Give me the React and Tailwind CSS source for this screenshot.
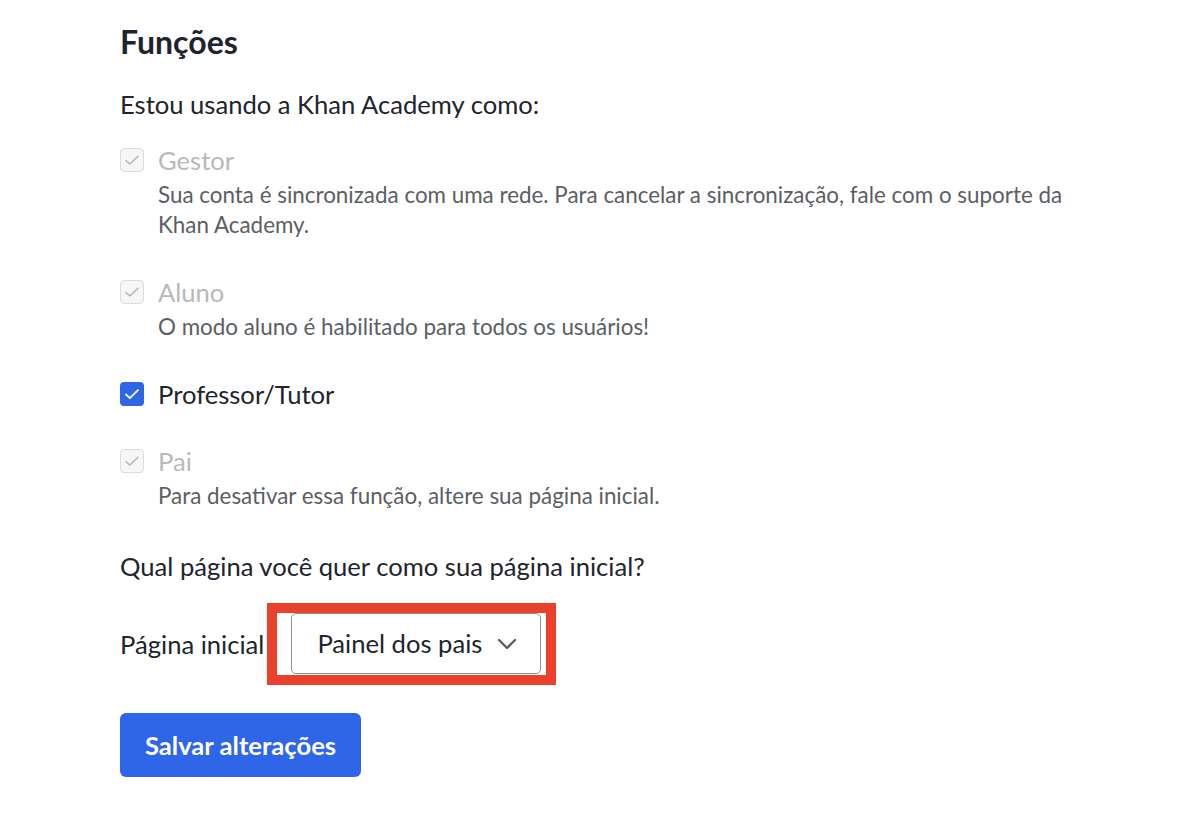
import React from "react";

function Check({ disabled }) {
  if (disabled) {
    return (
      <span className="flex h-[24px] w-[24px] shrink-0 items-center justify-center rounded-[4px] border border-[#dcdcdc] bg-[#f6f6f6]">
        <svg width="16" height="16" viewBox="0 0 16 16" fill="none">
          <path d="M2 8.5l3.8 3.6L14 4.2" stroke="#b3b3b3" strokeWidth="1.4" strokeLinecap="round" strokeLinejoin="round" />
        </svg>
      </span>
    );
  }
  return (
    <span className="flex h-[24px] w-[24px] shrink-0 items-center justify-center rounded-[4px] bg-[#2f66e8]">
      <svg width="16" height="16" viewBox="0 0 16 16" fill="none">
        <path d="M2 8.5l3.8 3.6L14 4.2" stroke="#ffffff" strokeWidth="1.8" strokeLinecap="round" strokeLinejoin="round" />
      </svg>
    </span>
  );
}

function Role({ label, desc, disabled }) {
  return (
    <div className="flex flex-col">
      <div className="flex items-center gap-[14px]">
        <Check disabled={disabled} />
        <span className={"text-[25.6px] leading-[32px] " + (disabled ? "text-[#b9b9b9]" : "text-[#21242c]")}>{label}</span>
      </div>
      {desc && (
        <p className="mt-[4px] pl-[38px] text-[22.4px] leading-[30px] text-[#5b5e63]">{desc}</p>
      )}
    </div>
  );
}

export default function App() {
  return (
    <div className="min-h-[832px] w-full bg-white pl-[120px] pr-[120px] pt-[24px] text-[#21242c]" style={{ fontFamily: "Lato, 'Noto Sans', sans-serif" }}>
      <h2 className="text-[32px] font-bold leading-[36px]">Funções</h2>
      <p className="mt-[29px] text-[25.6px] leading-[30px]">Estou usando a Khan Academy como:</p>
      <div className="mt-[25px] flex flex-col">
        <Role disabled label="Gestor" desc="Sua conta é sincronizada com uma rede. Para cancelar a sincronização, fale com o suporte da Khan Academy." />
        <div className="mt-[36px]">
          <Role disabled label="Aluno" desc="O modo aluno é habilitado para todos os usuários!" />
        </div>
        <div className="mt-[36px]">
          <Role label="Professor/Tutor" />
        </div>
        <div className="mt-[35px]">
          <Role disabled label="Pai" desc="Para desativar essa função, altere sua página inicial." />
        </div>
      </div>
      <p className="mt-[40px] text-[25.6px] leading-[30px]">Qual página você quer como sua página inicial?</p>
      <div className="mt-[32px] flex items-center">
        <span className="text-[25.6px] leading-[30px]">Página inicial</span>
        <div className="relative ml-[27px]">
          <button className="flex h-[61px] w-[250px] items-center justify-between rounded-[5px] border border-[#8f9094] bg-white pl-[25px] pr-[23px] text-[25.6px] text-[#21242c]">
            <span>Painel dos pais</span>
            <svg width="20" height="12" viewBox="0 0 20 12" fill="none">
              <path d="M2 2l8 8 8-8" stroke="#5b5e63" strokeWidth="2.4" strokeLinecap="round" strokeLinejoin="round" />
            </svg>
          </button>
          <div className="pointer-events-none absolute left-[-24px] top-[-10px] h-[82px] w-[289px] border-[10px] border-[#e9412b]" />
        </div>
      </div>
      <button className="mt-[39px] flex h-[64px] w-[241px] items-center justify-center rounded-[6px] bg-[#2f66e8] text-[25.6px] font-bold text-white">
        Salvar alterações
      </button>
    </div>
  );
}
